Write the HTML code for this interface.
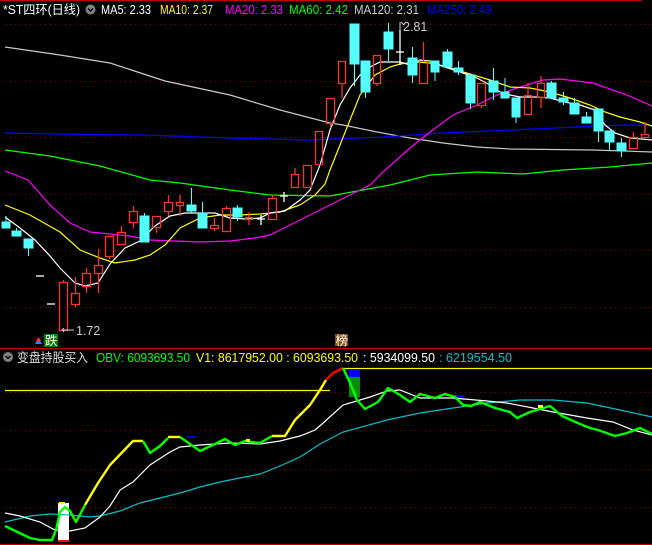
<!DOCTYPE html>
<html><head><meta charset="utf-8"><style>
html,body{margin:0;padding:0;background:#000;width:652px;height:545px;overflow:hidden}
svg{display:block}
text{font-family:"Liberation Sans","Noto Sans CJK SC",sans-serif;font-size:12.5px}
</style></head><body>
<svg width="652" height="545" viewBox="0 0 652 545" xmlns="http://www.w3.org/2000/svg">
<rect width="652" height="545" fill="#000"/>
<line x1="0" y1="0.5" x2="642" y2="0.5" stroke="#c00000"/>
<line x1="0" y1="348.5" x2="652" y2="348.5" stroke="#c00000"/>
<line x1="0" y1="544.5" x2="652" y2="544.5" stroke="#c00000"/>
<g stroke="#8b0000" stroke-dasharray="1,4" stroke-width="1">
<line x1="5" y1="24.5" x2="652" y2="24.5"/><line x1="5" y1="81.5" x2="652" y2="81.5"/>
<line x1="5" y1="137.5" x2="652" y2="137.5"/><line x1="5" y1="194.5" x2="652" y2="194.5"/>
<line x1="5" y1="250.5" x2="652" y2="250.5"/><line x1="5" y1="307.5" x2="652" y2="307.5"/>
<line x1="5" y1="392.5" x2="652" y2="392.5"/><line x1="5" y1="430.5" x2="652" y2="430.5"/>
<line x1="5" y1="469.5" x2="652" y2="469.5"/><line x1="5" y1="507.5" x2="652" y2="507.5"/>
</g>
<!-- header -->
<text x="3" y="14" fill="#fff" textLength="77" lengthAdjust="spacingAndGlyphs">*ST四环(日线)</text>
<circle cx="90.5" cy="9.5" r="5" fill="#808080"/><path d="M88 8.5l2.5 2.5 2.5-2.5" stroke="#000" fill="none" stroke-width="1.3"/>
<text x="101" y="14" fill="#fff" textLength="50" lengthAdjust="spacingAndGlyphs">MA5: 2.33</text>
<text x="160" y="14" fill="#ff0" textLength="53" lengthAdjust="spacingAndGlyphs">MA10: 2.37</text>
<text x="225" y="14" fill="#f0f" textLength="58" lengthAdjust="spacingAndGlyphs">MA20: 2.33</text>
<text x="289" y="14" fill="#0f0" textLength="59" lengthAdjust="spacingAndGlyphs">MA60: 2.42</text>
<text x="354" y="14" fill="#ccc" textLength="65" lengthAdjust="spacingAndGlyphs">MA120: 2.31</text>
<text x="427" y="14" fill="#0000ff" textLength="65" lengthAdjust="spacingAndGlyphs">MA250: 2.49</text>
<!-- MAs -->
<g fill="none" stroke-width="1.2">
<polyline stroke="#c8c8c8" points="5,47 60,55 110,63 165,81 230,95 280,110 330,123 343,125 377,132 410,138 443,143 477,147 510,149 593,150 652,152"/>
<polyline stroke="#0000ff" points="5,133 58,134 140,135 175,136 200,137 230,138 310,140 383,137 443,133 510,130 577,127 627,125 652,125"/>
<polyline stroke="#00ff00" points="5,150 50,156 100,166 150,180 180,183 230,190 270,195 330,196 390,185 430,175 477,172 523,174 563,170 610,167 652,163"/>
<polyline stroke="#ff00ff" points="5,171 28,180 50,205 70,223 90,232 110,234 130,236 150,240 175,241 200,242 230,241 255,238 270,235 290,225 300,220 330,205 370,185 383,172 410,148 430,132 453,115 477,105 497,95 517,88 543,80 560,79 593,83 627,95 652,106"/>
<polyline stroke="#ffff00" points="5,205 30,215 60,232 80,250 100,258 115,263 135,260 150,255 165,245 180,228 200,218 220,215 240,215 260,214 280,212 300,205 315,195 325,184 330,170 340,145 350,120 360,95 375,75 390,67 400,64 415,62 430,63 450,68 470,74 490,80 510,87 530,88 550,92 570,98 590,105 605,112 620,117 640,122 652,126"/>
<polyline stroke="#ffffff" points="5,217 20,228 35,240 50,256 60,268 75,283 85,286 98,283 110,264 125,248 140,241 155,226 170,216 185,213 200,213 215,213 230,218 245,219 260,218 270,213 285,211 300,200 310,190 320,165 330,130 340,105 350,88 360,75 370,67 380,62 390,62 400,62 410,65 420,60 430,61 445,67 460,72 475,77 490,85 500,92 510,95 520,97 535,97 550,98 565,102 580,105 595,110 605,125 615,133 630,138 652,140"/>
</g>
<!-- candles -->
<g id="c">
<g fill="#54ffff" stroke="#54ffff">
<line x1="6" y1="216" x2="6" y2="222"/><rect x="2" y="222" width="8" height="6"/>
<line x1="16.5" y1="228" x2="16.5" y2="231"/><rect x="12" y="231" width="9" height="5"/>
<line x1="28.5" y1="248" x2="28.5" y2="256"/><rect x="24" y="239" width="9" height="9"/>
<rect x="140" y="216" width="9" height="26"/><line x1="144.5" y1="213" x2="144.5" y2="216"/>
<rect x="187" y="205" width="9" height="6"/><line x1="191.5" y1="188" x2="191.5" y2="213"/>
<rect x="198" y="213" width="9" height="15"/><line x1="202.5" y1="202" x2="202.5" y2="213"/>
<rect x="233" y="208" width="9" height="9"/><line x1="237.5" y1="205" x2="237.5" y2="221"/>
<rect x="350" y="24" width="9" height="40"/><line x1="354.5" y1="64" x2="354.5" y2="86"/>
<rect x="361" y="61" width="9" height="31"/><line x1="365.5" y1="92" x2="365.5" y2="98"/>
<rect x="384" y="32" width="9" height="17"/><line x1="388.5" y1="23" x2="388.5" y2="61"/>
<rect x="408" y="58" width="9" height="17"/><line x1="412.5" y1="47" x2="412.5" y2="83"/>
<rect x="431" y="61" width="8" height="11"/><line x1="435" y1="72" x2="435" y2="81"/>
<rect x="443" y="52" width="9" height="15"/><line x1="447.5" y1="49" x2="447.5" y2="52"/>
<rect x="454" y="68" width="9" height="4"/><line x1="458.5" y1="61" x2="458.5" y2="75"/>
<rect x="466" y="75" width="9" height="28"/><line x1="470.5" y1="103" x2="470.5" y2="109"/>
<rect x="489" y="81" width="9" height="11"/><line x1="493.5" y1="68" x2="493.5" y2="100"/>
<rect x="501" y="92" width="8" height="6"/><line x1="505" y1="78" x2="505" y2="92"/>
<rect x="512" y="98" width="8" height="19"/><line x1="516" y1="117" x2="516" y2="123"/>
<rect x="547" y="83" width="9" height="15"/><line x1="551.5" y1="81" x2="551.5" y2="83"/>
<rect x="559" y="98" width="9" height="4"/><line x1="563.5" y1="92" x2="563.5" y2="105"/>
<rect x="570" y="103" width="9" height="11"/><line x1="574.5" y1="98" x2="574.5" y2="103"/>
<rect x="582" y="117" width="9" height="6"/><line x1="586.5" y1="112" x2="586.5" y2="117"/>
<rect x="594" y="109" width="9" height="22"/><line x1="598.5" y1="131" x2="598.5" y2="142"/>
<rect x="605" y="131" width="9" height="11"/><line x1="609.5" y1="142" x2="609.5" y2="151"/>
<rect x="617" y="143" width="9" height="8"/><line x1="621.5" y1="138" x2="621.5" y2="157"/>
</g>
<g fill="none" stroke="#ff3030" stroke-width="1.3">
<rect x="59.5" y="282.5" width="8" height="48"/><line x1="63.5" y1="280" x2="63.5" y2="282"/>
<rect x="71.5" y="293.5" width="8" height="11"/><line x1="75.5" y1="277" x2="75.5" y2="293"/><line x1="75.5" y1="305" x2="75.5" y2="307"/>
<rect x="82.5" y="273.5" width="8" height="13"/><line x1="86.5" y1="268" x2="86.5" y2="273"/><line x1="86.5" y1="287" x2="86.5" y2="293"/>
<rect x="94.5" y="265.5" width="8" height="8"/><line x1="98.5" y1="249" x2="98.5" y2="265"/><line x1="98.5" y1="274" x2="98.5" y2="293"/>
<rect x="105.5" y="236.5" width="8" height="20"/><line x1="109.5" y1="257" x2="109.5" y2="259"/>
<rect x="117.5" y="232.5" width="8" height="12"/><line x1="121.5" y1="226" x2="121.5" y2="232"/>
<rect x="129.5" y="211.5" width="8" height="11"/><line x1="133.5" y1="206" x2="133.5" y2="211"/><line x1="133.5" y1="223" x2="133.5" y2="228"/>
<rect x="152.5" y="216.5" width="8" height="11"/><line x1="156.5" y1="228" x2="156.5" y2="233"/>
<rect x="164.5" y="202.5" width="8" height="9"/><line x1="168.5" y1="195" x2="168.5" y2="202"/><line x1="168.5" y1="212" x2="168.5" y2="216"/>
<rect x="176.5" y="202.5" width="7" height="3"/><line x1="180" y1="195" x2="180" y2="202"/><line x1="180" y1="206" x2="180" y2="216"/>
<rect x="210.5" y="225.5" width="8" height="3"/><line x1="214.5" y1="218" x2="214.5" y2="225"/><line x1="214.5" y1="229" x2="214.5" y2="231"/>
<rect x="222.5" y="208.5" width="8" height="23"/><line x1="226.5" y1="206" x2="226.5" y2="208"/>
<rect x="245.5" y="217.5" width="7" height="2"/><line x1="249" y1="212" x2="249" y2="217"/><line x1="249" y1="220" x2="249" y2="225"/>
<rect x="268.5" y="198.5" width="8" height="21"/><line x1="272.5" y1="195" x2="272.5" y2="198"/>
<rect x="291.5" y="174.5" width="7" height="13"/><line x1="295" y1="168" x2="295" y2="174"/>
<rect x="303.5" y="165.5" width="8" height="22"/>
<rect x="315.5" y="131.5" width="7" height="33"/>
<rect x="326.5" y="98.5" width="8" height="25"/><line x1="330.5" y1="124" x2="330.5" y2="128"/>
<rect x="338.5" y="61.5" width="7" height="22"/><line x1="342" y1="84" x2="342" y2="98"/>
<rect x="373.5" y="55.5" width="7" height="28"/><line x1="377" y1="84" x2="377" y2="86"/>
<rect x="419.5" y="61.5" width="8" height="22"/><line x1="423.5" y1="42" x2="423.5" y2="61"/>
<rect x="477.5" y="83.5" width="8" height="22"/><line x1="481.5" y1="106" x2="481.5" y2="108"/>
<rect x="524.5" y="95.5" width="7" height="19"/><line x1="528" y1="83" x2="528" y2="95"/>
<rect x="537.5" y="83.5" width="7" height="14"/><line x1="541" y1="76" x2="541" y2="83"/><line x1="541" y1="98" x2="541" y2="108"/>
<rect x="629.5" y="137.5" width="8" height="11"/><line x1="633.5" y1="132" x2="633.5" y2="137"/>
<rect x="641.5" y="134.5" width="7" height="3"/><line x1="645" y1="122" x2="645" y2="134"/>
</g>
<g stroke="#fff" stroke-width="1.3">
<line x1="36" y1="276" x2="44" y2="276"/><line x1="47" y1="304" x2="55" y2="304"/>
<line x1="257" y1="219" x2="265" y2="219"/><line x1="261" y1="215" x2="261" y2="225"/>
<line x1="280" y1="196" x2="288" y2="196"/><line x1="284" y1="192" x2="284" y2="202"/>
<line x1="396" y1="52" x2="404" y2="52"/><line x1="400" y1="30" x2="400" y2="65"/>
</g>
</g>
<path d="M400 30 L400 22 M401 22 L404 25" stroke="#ccc" fill="none"/>
<text x="403" y="31" fill="#ccc" font-size="12">2.81</text>
<path d="M62 330 L74 330 M64 328 L62 330 L64 332" stroke="#ccc" fill="none"/>
<text x="76" y="335" fill="#ccc" font-size="12">1.72</text>
<!-- markers -->
<path d="M35 344 L38.5 338 L42 344Z" fill="#3080ff"/><path d="M36 341 L38.5 337 L41 341" fill="#ff3030"/>
<rect x="44" y="334" width="14" height="13" fill="#008000"/>
<text x="45" y="345" fill="#fff" font-size="12">跌</text>
<rect x="335" y="334" width="13" height="12" fill="#8b4a10"/>
<text x="335.5" y="345" fill="#fff" font-size="12">榜</text>
<!-- lower header -->
<circle cx="8" cy="357" r="5" fill="#808080"/><path d="M5.5 356 l2.5 2.5 2.5-2.5" stroke="#000" fill="none" stroke-width="1.3"/>
<text x="17" y="362" fill="#ddd" textLength="71" lengthAdjust="spacingAndGlyphs">变盘持股买入</text>
<text x="96" y="362" fill="#00ff00" textLength="94" lengthAdjust="spacingAndGlyphs">OBV: 6093693.50</text>
<text x="196" y="362" fill="#ffff00" textLength="162" lengthAdjust="spacingAndGlyphs">V1: 8617952.00 : 6093693.50</text>
<text x="363" y="362" fill="#fff" textLength="72" lengthAdjust="spacingAndGlyphs">: 5934099.50</text>
<text x="439" y="362" fill="#00c0c8" textLength="73" lengthAdjust="spacingAndGlyphs">: 6219554.50</text>
<!-- lower panel -->
<line x1="5" y1="390.5" x2="330" y2="390.5" stroke="#ffff00" stroke-width="1.2"/>
<line x1="343" y1="368.5" x2="652" y2="368.5" stroke="#ffff00" stroke-width="1.2"/>
<rect x="58" y="503" width="11" height="37" fill="#fff"/>
<rect x="58" y="540" width="11" height="2" fill="#ff0000"/>
<rect x="59" y="502" width="6" height="2" fill="#ffff00"/>
<rect x="349" y="369" width="11" height="8" fill="#0000ff"/>
<rect x="349" y="377" width="11" height="20" fill="#009000"/>
<rect x="453" y="395" width="11" height="5" fill="#0000ff"/>
<line x1="186" y1="437" x2="197" y2="437" stroke="#0000ff" stroke-width="1.5"/>
<g fill="none" stroke-width="1.2">
<polyline stroke="#00c0c8" points="5,522 30,516 50,514 70,515 90,517 100,516 120,511 140,503 160,498 180,493 200,487 220,482 240,478 260,474 280,466 300,457 320,444 343,432 387,420 420,413 453,408 487,403 520,400 553,400 587,403 620,410 652,417"/>
<polyline stroke="#ffffff" points="5,513 20,516 40,522 55,530 70,531 85,528 100,517 110,506 120,490 133,482 150,465 170,452 180,447 200,445 230,443 260,444 280,441 300,436 315,430 322,424 343,405 370,397 387,391 400,390 420,398 453,398 487,401 507,403 533,408 553,412 587,418 613,422 633,430 652,435"/>
</g>
<g fill="none" stroke-width="2.4" stroke-linejoin="round">
<polyline stroke="#00ff00" points="5,526 30,538 40,540 52,540 56,530 60,512 65,507 70,511 76,522 85,505"/>
<polyline stroke="#ffff00" points="85,505 98,483 110,465 133,441 143,441"/>
<polyline stroke="#00ff00" points="143,441 150,453 160,446 168,438"/>
<polyline stroke="#ffff00" points="168,437 180,437"/>
<polyline stroke="#00ff00" points="180,437 190,444 200,451 215,444 225,439 235,445 245,441 250,442 260,443 272,436"/>
<polyline stroke="#ffff00" points="272,436 285,436 295,420 310,405 320,390 326,380"/>
<polyline stroke="#ff0000" points="326,380 333,373 343,368"/>
<polyline stroke="#00ff00" points="343,368 350,383 357,400 365,409 378,402 388,388 400,395 410,402 420,394 435,398 445,394 455,397 463,405 471,406 480,402 495,408 510,412 517,418 530,412 540,409 550,406 562,416 580,424 590,428 598,430 615,436 627,433 640,428 652,434"/>
</g>
<rect x="538" y="405" width="5" height="3" fill="#ffff00"/>
<rect x="246" y="439" width="4" height="3" fill="#ffff00"/>
</svg>
</body></html>
